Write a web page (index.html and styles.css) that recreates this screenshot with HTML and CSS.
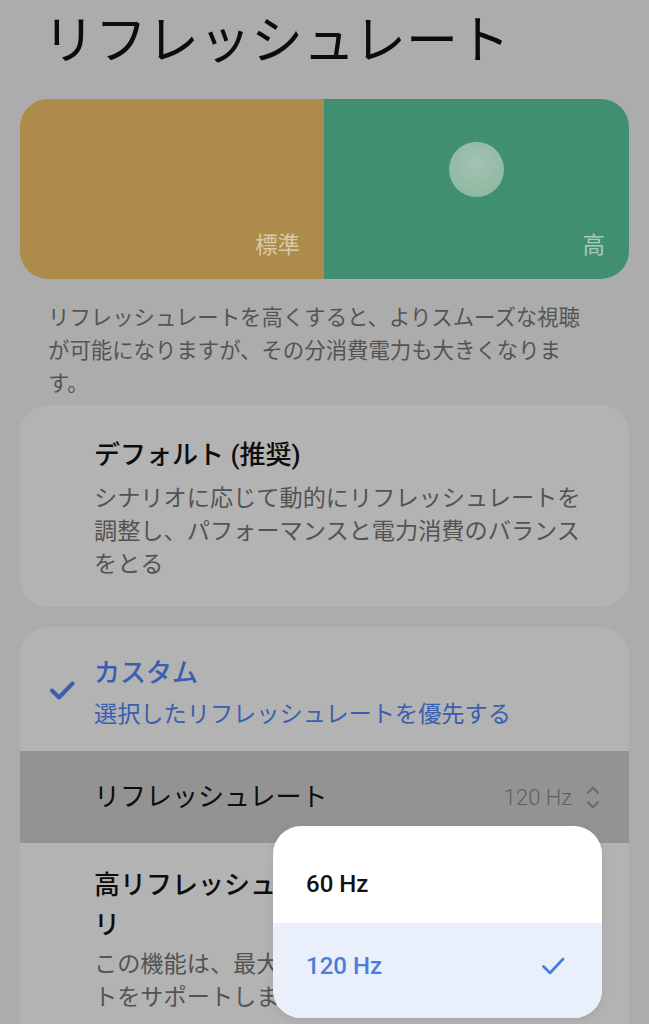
FILE: index.html
```html
<!DOCTYPE html>
<html lang="ja">
<head>
<meta charset="utf-8">
<title>リフレッシュレート</title>
<link rel="stylesheet" href="styles.css">
</head>
<body>
<div class="page">
  <h1 class="title">リフレッシュレート</h1>

  <div class="slider">
    <div class="seg seg-std">
      <span class="seg-label">標準</span>
    </div>
    <div class="seg seg-high">
      <span class="knob"></span>
      <span class="seg-label">高</span>
    </div>
  </div>

  <p class="note">リフレッシュレートを高くすると、よりスムーズな視聴が可能になりますが、その分消費電力も大きくなります。</p>

  <div class="card card-default">
    <div class="opt-title">デフォルト (推奨)</div>
    <div class="opt-desc">シナリオに応じて動的にリフレッシュレートを調整し、パフォーマンスと電力消費のバランスをとる</div>
  </div>

  <div class="card card-custom">
    <div class="custom-head">
      <svg class="check" width="26" height="20" viewBox="0 0 26 20"><path d="M3 9.5 L10 16.5 L23.5 2.5" fill="none" stroke="#3a5fae" stroke-width="4" stroke-linecap="round" stroke-linejoin="round"/></svg>
      <div class="custom-text">
        <div class="opt-title blue">カスタム</div>
        <div class="opt-desc blue">選択したリフレッシュレートを優先する</div>
      </div>
    </div>
    <div class="rate-row">
      <span class="rate-label">リフレッシュレート</span>
      <span class="rate-value">120 Hz</span>
      <svg class="updown" width="14" height="26" viewBox="0 0 14 26"><path d="M2 9 L7 3.5 L12 9 M2 18 L7 23.5 L12 18" fill="none" stroke="#6b6b6b" stroke-width="2" stroke-linecap="round" stroke-linejoin="round"/></svg>
    </div>
    <div class="apps">
      <div class="apps-title">高リフレッシュレートをサポートするアプ<br>リ</div>
      <div class="apps-desc">この機能は、最大リフレッシュレー<br>トをサポートしますアプリ</div>
    </div>
  </div>

  <div class="menu">
    <div class="menu-item">60 Hz</div>
    <div class="menu-item selected">
      <span>120 Hz</span>
      <svg width="24" height="20" viewBox="0 0 24 20"><path d="M2.5 10.5 L9 17 L22 3" fill="none" stroke="#4a7fd9" stroke-width="2.8" stroke-linecap="round" stroke-linejoin="round"/></svg>
    </div>
  </div>
</div>
</body>
</html>
```

FILE: styles.css
```css
* { box-sizing: border-box; }

html, body {
  margin: 0;
  padding: 0;
  background: #acacac;
}

body {
  font-family: Roboto, "Noto Sans CJK JP", sans-serif;
  color: #111;
  width: 649px;
  height: 1024px;
  overflow: hidden;
}

.page {
  position: relative;
  height: 1024px;
}

.title {
  margin: 0;
  padding: 11px 0 0 43px;
  font-family: "Noto Sans CJK JP", sans-serif;
  font-weight: 400;
  font-size: 52px;
  line-height: 52px;
  color: #0c0c0c;
}

.slider {
  margin: 36px 20px 0;
  height: 180px;
  border-radius: 28px;
  overflow: hidden;
  display: flex;
}

.seg {
  display: flex;
  flex-direction: column;
  padding: 0 24px 24px 0;
}

.seg-std {
  width: 304px;
  background: #ad8b4a;
}

.seg-high {
  flex: 1;
  background: #418f71;
  align-items: center;
}

.seg-label {
  margin-top: auto;
  align-self: flex-end;
  font-family: "Noto Sans CJK JP", sans-serif;
  font-size: 22.5px;
  line-height: 24px;
  color: rgba(255, 255, 255, 0.55);
}

.knob {
  margin: 43px 0 0 24px;
  width: 55px;
  height: 55px;
  border-radius: 50%;
  background: radial-gradient(circle at 50% 40%, #a3c2b2 0%, #93bba5 60%, #88b69c 100%);
}

.note {
  margin: 20px 61px 0 48px;
  font-family: "Noto Sans CJK JP", sans-serif;
  font-size: 21.4px;
  line-height: 33px;
  color: #545454;
}

.card {
  margin: 7px 20px 0;
  background: #b3b3b3;
  border-radius: 28px;
}

.card-default {
  padding: 33px 39px 28px 74px;
}

.opt-title {
  font-size: 26px;
  line-height: 34px;
  font-weight: 500;
  color: #0d0d0d;
}

.opt-desc {
  margin-top: 8px;
  font-family: "Noto Sans CJK JP", sans-serif;
  font-size: 23.2px;
  line-height: 33px;
  color: #535353;
}

.blue { color: #3a5fae; }

.card-custom {
  margin-top: 20px;
  height: 420px;
  overflow: hidden;
  border-radius: 28px 28px 0 0;
}

.custom-head {
  display: flex;
  align-items: center;
  gap: 19px;
  padding: 29px 20px 22px 29px;
}

.check {
  flex: none;
  margin-top: -4px;
}

.custom-text .opt-desc {
  margin-top: 6px;
}

.rate-row {
  height: 92px;
  background: #939393;
  display: flex;
  align-items: center;
  padding: 0 29px 0 74px;
}

.rate-label {
  flex: 1;
  font-size: 26px;
  line-height: 34px;
  color: #0d0d0d;
}

.rate-value {
  font-size: 22px;
  font-weight: 300;
  color: #606060;
  margin-right: 14px;
}

.apps {
  padding: 22px 39px 0 74px;
}

.apps-title {
  font-size: 26px;
  line-height: 40px;
  font-weight: 500;
  color: #0d0d0d;
}

.apps-desc {
  margin-top: 1px;
  font-family: "Noto Sans CJK JP", sans-serif;
  font-size: 23.2px;
  line-height: 33px;
  color: #535353;
  white-space: nowrap;
}

.menu {
  position: absolute;
  left: 273px;
  top: 826px;
  width: 329px;
  height: 192px;
  background: #fff;
  border-radius: 28px;
  overflow: hidden;
  box-shadow: 0 2px 10px rgba(0, 0, 0, 0.08);
}

.menu-item {
  height: 97px;
  display: flex;
  align-items: center;
  padding: 18px 37px 0 33px;
  font-size: 24px;
  font-weight: 500;
  color: #111;
}

.menu-item.selected {
  height: 95px;
  padding: 0 37px 10px 33px;
  background: #e9f0fb;
  color: #4a7fd9;
  justify-content: space-between;
}
```
